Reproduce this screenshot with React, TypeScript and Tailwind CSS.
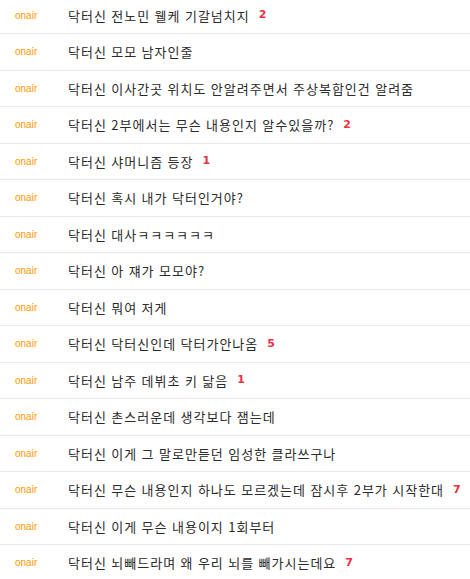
const posts: { title: string; count?: number }[] = [
  { title: '닥터신 전노민 웰케 기갈넘치지', count: 2 },
  { title: '닥터신 모모 남자인줄' },
  { title: '닥터신 이사간곳 위치도 안알려주면서 주상복합인건 알려줌' },
  { title: '닥터신 2부에서는 무슨 내용인지 알수있을까?', count: 2 },
  { title: '닥터신 샤머니즘 등장', count: 1 },
  { title: '닥터신 혹시 내가 닥터인거야?' },
  { title: '닥터신 대사ㅋㅋㅋㅋㅋㅋ' },
  { title: '닥터신 아 쟤가 모모야?' },
  { title: '닥터신 뭐여 저게' },
  { title: '닥터신 닥터신인데 닥터가안나옴', count: 5 },
  { title: '닥터신 남주 데뷔초 키 닮음', count: 1 },
  { title: '닥터신 촌스러운데 생각보다 잼는데' },
  { title: '닥터신 이게 그 말로만듣던 임성한 클라쓰구나' },
  { title: '닥터신 무슨 내용인지 하나도 모르겠는데 잠시후 2부가 시작한대', count: 7 },
  { title: '닥터신 이게 무슨 내용이지 1회부터' },
  { title: '닥터신 뇌빼드라며 왜 우리 뇌를 빼가시는데요', count: 7 },
];

function Row({ title, count }: { title: string; count?: number }) {
  return (
    <li className="flex h-[36.5px] items-center border-b border-[#e9e9e9]">
      <span className="w-[68px] shrink-0 pl-[15px] font-['Liberation_Sans',sans-serif] text-[10px] text-[#ff9900]">
        onair
      </span>
      <span className="whitespace-nowrap font-['Noto_Sans_CJK_KR',sans-serif] text-[13px] leading-none tracking-[1px] text-[#2b2b2b] [word-spacing:0.5px]">
        {title}
      </span>
      {count !== undefined && (
        <span className="ml-[9px] font-['DejaVu_Sans',sans-serif] text-[11px] font-bold text-[#e8323f]">
          {count}
        </span>
      )}
    </li>
  );
}

export default function App() {
  return (
    <div className="h-[579px] w-[470px] overflow-hidden bg-white">
      <ul className="-mt-[2.5px]">
        {posts.map((p, i) => (
          <Row key={i} title={p.title} count={p.count} />
        ))}
      </ul>
    </div>
  );
}
